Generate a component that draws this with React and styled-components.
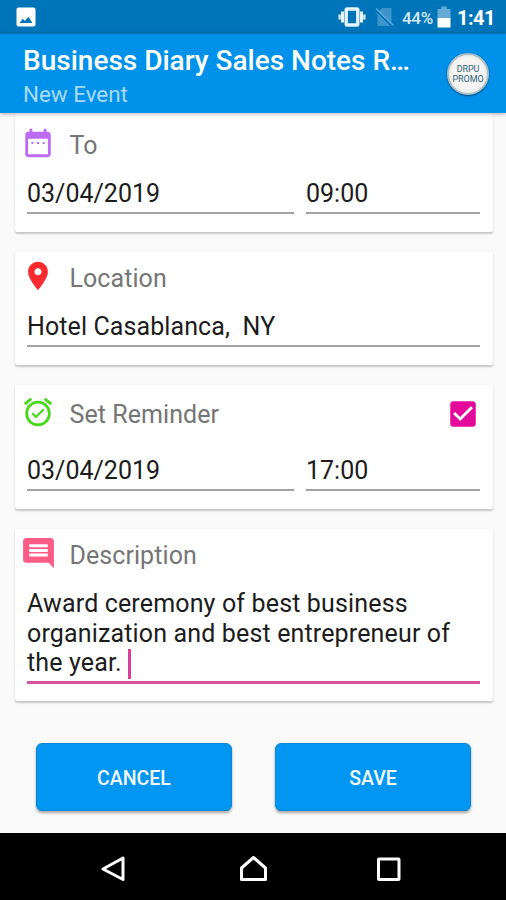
import React from "react";
import styled, {createGlobalStyle} from "styled-components";

const GlobalStyle = createGlobalStyle`
  * {
    box-sizing: border-box;
  }
  body {
    margin: 0;
    font-family: Roboto, "Liberation Sans", sans-serif;
  }
`;

const Screen = styled.div`
  display: flex;
  flex-direction: column;
  width: 506px;
  height: 900px;
  overflow: hidden;
  background: #fafafa;
`;

const StatusBar = styled.div`
  display: flex;
  align-items: center;
  flex: none;
  height: 34px;
  padding: 0 12px 0 16px;
  background: #0074b9;
  color: #ffffff;
`;

const StatusIcons = styled.div`
  display: flex;
  align-items: center;
  margin-left: auto;

  svg {
    display: block;
  }
`;

const Signals = styled.div`
  display: flex;
  gap: 9px;
`;

const BatteryLevel = styled.span`
  width: 32px;
  margin: 2px 3px 0 7px;
  font-size: 17px;
  font-weight: 500;
  line-height: 20px;
  letter-spacing: -0.3px;
  white-space: nowrap;
  color: #d6eaf6;
`;

const Clock = styled.span`
  width: 37px;
  margin: 2px 0 0 6px;
  font-size: 20px;
  font-weight: 700;
  line-height: 22px;
  letter-spacing: -0.5px;
  white-space: nowrap;
`;

const AppBar = styled.header`
  display: flex;
  align-items: center;
  justify-content: space-between;
  flex: none;
  z-index: 1;
  height: 79px;
  padding: 0 17px 0 23px;
  background: #0092ea;
  box-shadow: 0 1px 4px rgba(0, 0, 0, 0.3);
`;

const Title = styled.h1`
  margin: 6px 0 0;
  font-size: 28px;
  font-weight: 500;
  line-height: 34px;
  white-space: nowrap;
  color: #ffffff;
`;

const Subtitle = styled.div`
  margin-top: 1px;
  font-size: 22.4px;
  line-height: 30px;
  color: #a9dafa;
`;

const Badge = styled.div`
  display: flex;
  flex-direction: column;
  align-items: center;
  justify-content: center;
  width: 42px;
  height: 42px;
  padding-top: 2px;
  border: 2px solid #b0bdc2;
  border-radius: 50%;
  background: radial-gradient(circle, #f5f5f3 55%, #d6dcde 100%);
  box-shadow: 0 1px 2px rgba(0, 40, 70, 0.7);
  font-size: 9px;
  line-height: 9.5px;
  letter-spacing: -0.1px;
  color: #2f6279;
`;

const Form = styled.main`
  display: flex;
  flex-direction: column;
  flex: 1;
  gap: 20px;
  padding: 0 13px 0 15px;
`;

const Card = styled.section`
  flex: none;
  height: ${({height}) => height}px;
  padding: ${({top}) => top}px 13px 0 8px;
  border-radius: 2px;
  background: #ffffff;
  box-shadow: 0 2px 2px rgba(0, 0, 0, 0.2), 0 0 1px rgba(0, 0, 0, 0.08);
`;

const CardHeader = styled.div`
  display: flex;
  align-items: center;
  height: 34px;
`;

const IconSlot = styled.div`
  display: flex;
  justify-content: center;
  width: 30px;
  margin-right: 16.5px;

  svg {
    display: block;
    flex: none;
  }
`;

const Label = styled.h2`
  flex: 1;
  margin: 0;
  padding-top: 5px;
  font-size: 25px;
  font-weight: 400;
  line-height: 34px;
  letter-spacing: 0.07px;
  color: #757575;
`;

const CheckSlot = styled.div`
  padding-top: 4px;

  svg {
    display: block;
  }
`;

const Fields = styled.div`
  display: flex;
  gap: 12px;
  margin: ${({offset}) => offset}px 0 0 4px;
`;

const Field = styled.div`
  flex: ${({width}) => (width ? `0 0 ${width}px` : "1")};
  height: 37px;
  border-bottom: 2px solid #a3a3a3;
  font-size: 25px;
  line-height: 34px;
  letter-spacing: ${({tracking = 0}) => tracking}px;
  white-space: pre;
  color: #1c1c1c;
`;

const TextArea = styled.div`
  height: 95px;
  margin: 19px 0 0 4px;
  border-bottom: 3px solid #d8519f;
  font-size: 25px;
  line-height: 29.5px;
  letter-spacing: 0.15px;
  white-space: nowrap;
  color: #1c1c1c;
`;

const Caret = styled.span`
  display: inline-block;
  width: 3px;
  height: 30px;
  margin: -4px 0 -6px 6px;
  vertical-align: -2px;
  background: #d8409b;
`;

const Actions = styled.div`
  display: flex;
  gap: 43px;
  padding: 22px 22px 0 21px;
`;

const Button = styled.button`
  flex: 1;
  height: 68px;
  padding: 3px 0 0;
  border: 1px solid #0c86d8;
  border-radius: 6px;
  background: #0296f3;
  box-shadow: 0 2px 3px rgba(0, 0, 0, 0.35);
  font-family: inherit;
  font-size: 19.5px;
  font-weight: 500;
  color: #f4faff;
`;

const NavBar = styled.nav`
  display: flex;
  align-items: center;
  flex: none;
  height: 67px;
  padding: 5px 0 0 98px;
  gap: 108px;
  background: #000000;

  svg {
    display: block;
    overflow: visible;
  }
`;

const Icon = ({size = 34, color, d}) => (
  <svg width={size} height={size} viewBox="0 0 24 24" fill={color}>
    <path d={d}/>
  </svg>
);

const calendar = "M8.7 11.3H7.3v1.4h1.4v-1.4zm4 0h-1.4v1.4h1.4v-1.4zm4 0h-1.4v1.4h1.4v-1.4zM19 4h-1V2h-2v2H8V2H6v2H5c-1.11 0-1.99.9-1.99 2L3 20c0 1.1.89 2 2 2h14c1.1 0 2-.9 2-2V6c0-1.1-.9-2-2-2zm0 16H5V9h14v11z";
const place = "M12 2C8.13 2 5 5.13 5 9c0 5.25 7 13 7 13s7-7.75 7-13c0-3.87-3.13-7-7-7zm0 9.5c-1.38 0-2.5-1.12-2.5-2.5s1.12-2.5 2.5-2.5 2.5 1.12 2.5 2.5-1.12 2.5-2.5 2.5z";
const alarmOn = "M22 5.72l-4.6-3.86-1.29 1.53 4.6 3.86L22 5.72zM7.88 3.39L6.6 1.86 2 5.71l1.29 1.53 4.59-3.85zM12 4c-4.97 0-9 4.03-9 9s4.02 9 9 9c4.97 0 9-4.03 9-9s-4.03-9-9-9zm0 16c-3.87 0-7-3.13-7-7s3.13-7 7-7 7 3.13 7 7-3.13 7-7 7zm-1.46-5.47L8.41 12.4l-1.06 1.06 3.18 3.18 6-6-1.06-1.06-4.93 4.95z";
const comment = "M21.99 4c0-1.1-.89-2-1.99-2H4c-1.1 0-2 .9-2 2v12c0 1.1.9 2 2 2h14.6l3.4 3.6-.01-17.6zM18 14H6v-2h12v2zm0-3H6V9h12v2zm0-3H6V6h12v2z";
const checkbox = "M19 3H5c-1.11 0-2 .9-2 2v14c0 1.1.89 2 2 2h14c1.11 0 2-.9 2-2V5c0-1.1-.89-2-2-2zm-9 14l-5-5 1.41-1.41L10 14.17l7.59-7.59L19 8l-9 9z";

const PictureIcon = () => (
  <svg width="20" height="20" viewBox="0 0 20 20">
    <rect x="0.5" y="0.5" width="19" height="19" rx="2" fill="#ffffff"/>
    <path d="M3.5 16l3.3-4.2 2 2.2 3.6-4.2 4.1 6.2z" fill="#0074b9"/>
  </svg>
);

const VibrateIcon = () => (
  <svg width="28" height="20" viewBox="0 0 28 20" fill="none" stroke="#e8f4fb">
    <rect x="8.2" y="2" width="11.6" height="16" rx="1" strokeWidth="3.4"/>
    <path d="M4.5 4.5v11M23.5 4.5v11" strokeWidth="3"/>
    <path d="M1.6 7.5v5M26.4 7.5v5" strokeWidth="2.2"/>
  </svg>
);

const NoSimIcon = () => (
  <svg width="20" height="20" viewBox="0 0 20 20">
    <path d="M7 1h9.5v15.5L3.5 4.5zM2.5 6v13h13z" fill="#3d94ca"/>
    <path d="M1 1.5l17.5 17" stroke="#62abd6" strokeWidth="1.5"/>
  </svg>
);

const BatteryIcon = () => (
  <svg width="14" height="22" viewBox="0 0 14 22">
    <path d="M0.5 3h3.8V0.5h5.4V3h3.8v9h-13z" fill="#64acd5"/>
    <path d="M0.5 12h13v9.5h-13z" fill="#ffffff"/>
  </svg>
);

const App = () => (
  <Screen>
    <GlobalStyle/>
    <StatusBar>
      <PictureIcon/>
      <StatusIcons>
        <Signals>
          <VibrateIcon/>
          <NoSimIcon/>
        </Signals>
        <BatteryLevel>44%</BatteryLevel>
        <BatteryIcon/>
        <Clock>1:41</Clock>
      </StatusIcons>
    </StatusBar>
    <AppBar>
      <div>
        <Title>Business Diary Sales Notes R…</Title>
        <Subtitle>New Event</Subtitle>
      </div>
      <Badge>
        <span>DRPU</span>
        <span>PROMO</span>
      </Badge>
    </AppBar>
    <Form>
      <Card height={119} top={13}>
        <CardHeader>
          <IconSlot><Icon color="#bd6bf2" d={calendar}/></IconSlot>
          <Label>To</Label>
        </CardHeader>
        <Fields offset={17}>
          <Field width={267}>03/04/2019</Field>
          <Field>09:00</Field>
        </Fields>
      </Card>
      <Card height={113} top={7}>
        <CardHeader>
          <IconSlot><Icon color="#fb2a2e" d={place}/></IconSlot>
          <Label>Location</Label>
        </CardHeader>
        <Fields offset={17}>
          <Field tracking={0.1}>Hotel Casablanca,  NY</Field>
        </Fields>
      </Card>
      <Card height={124} top={10}>
        <CardHeader>
          <IconSlot><Icon color="#45d916" d={alarmOn}/></IconSlot>
          <Label>Set Reminder</Label>
          <CheckSlot><Icon color="#e5099b" d={checkbox}/></CheckSlot>
        </CardHeader>
        <Fields offset={25}>
          <Field width={267}>03/04/2019</Field>
          <Field>17:00</Field>
        </Fields>
      </Card>
      <Card height={172} top={7}>
        <CardHeader>
          <IconSlot><Icon size={37} color="#fd5c86" d={comment}/></IconSlot>
          <Label>Description</Label>
        </CardHeader>
        <TextArea>
          Award ceremony of best business<br/>
          organization and best entrepreneur of<br/>
          the year.<Caret/>
        </TextArea>
      </Card>
      <Actions>
        <Button type="button">CANCEL</Button>
        <Button type="button">SAVE</Button>
      </Actions>
    </Form>
    <NavBar>
      <svg width="30" height="30" viewBox="0 0 30 30" fill="none" stroke="#ffffff" strokeWidth="3">
        <path d="M25 4v21.5L5 15z" strokeLinejoin="round"/>
      </svg>
      <svg width="30" height="30" viewBox="0 0 30 30" fill="none" stroke="#ffffff" strokeWidth="3">
        <path d="M5.5 25.5V14L17.5 3.5 29.5 14v11.5z" strokeLinejoin="round"/>
      </svg>
      <svg width="30" height="30" viewBox="0 0 30 30" fill="none" stroke="#ffffff" strokeWidth="3">
        <rect x="4.5" y="5" width="20.5" height="20.5" rx="0.5"/>
      </svg>
    </NavBar>
  </Screen>
);

export default App;
